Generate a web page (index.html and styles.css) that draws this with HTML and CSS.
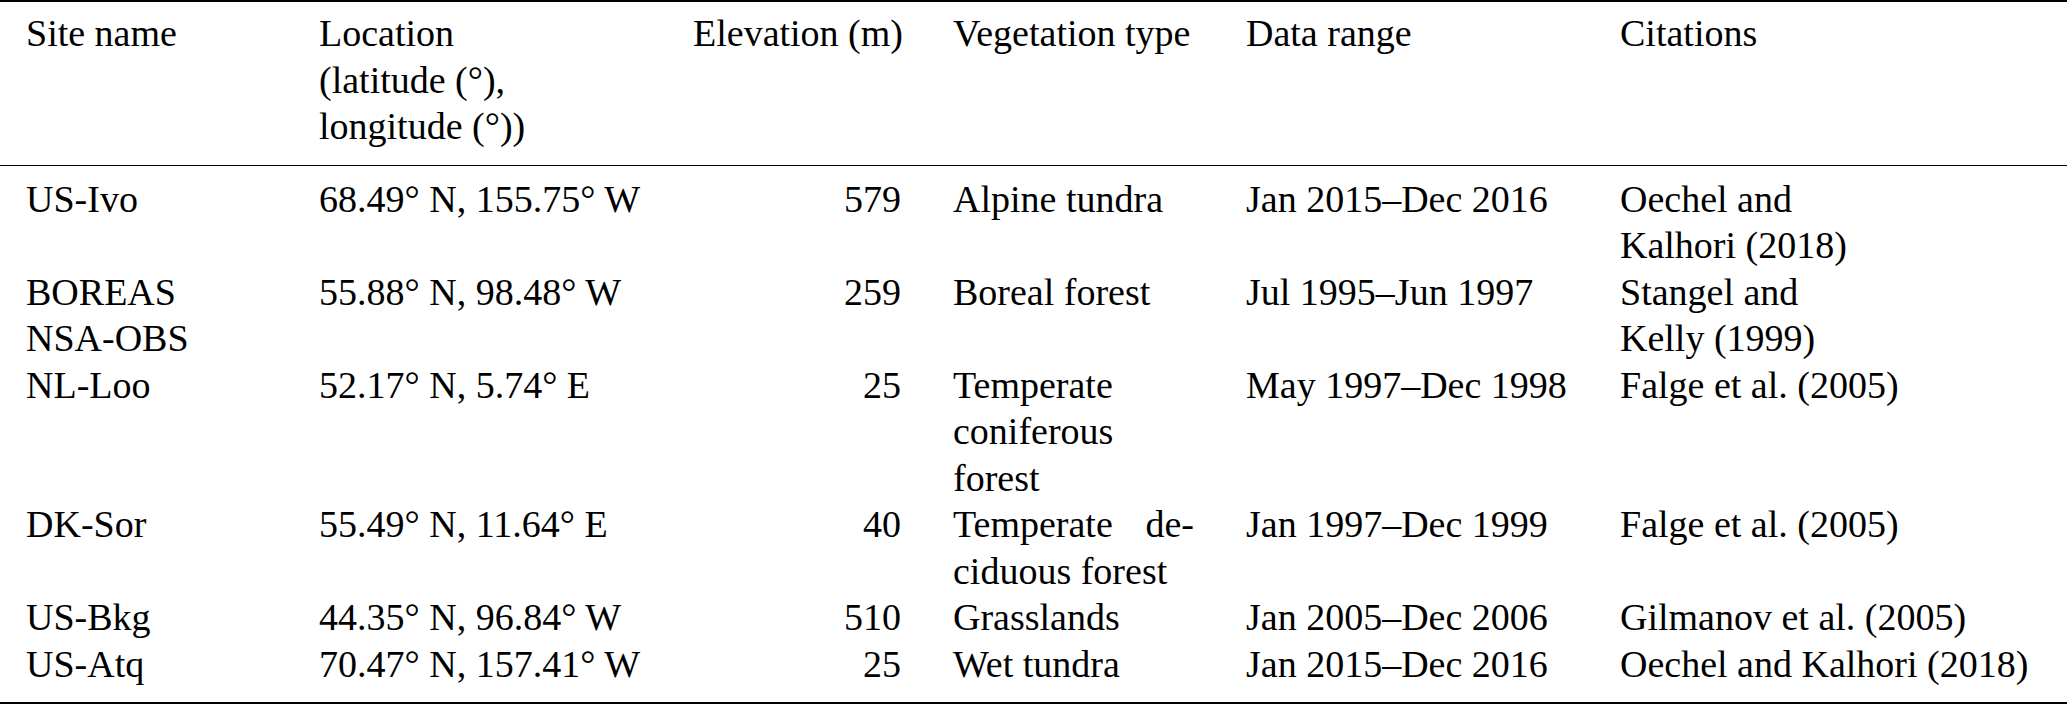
FILE: index.html
```html
<!DOCTYPE html>
<html lang="en">
<head>
<meta charset="utf-8">
<title>Site table</title>
<link rel="stylesheet" href="styles.css">
</head>
<body>
<table class="sites">
  <colgroup>
    <col class="c-site">
    <col class="c-loc">
    <col class="c-elev">
    <col class="c-veg">
    <col class="c-range">
    <col class="c-cite">
  </colgroup>
  <thead>
    <tr>
      <th>Site name</th>
      <th>Location<br>(latitude (°),<br>longitude (°))</th>
      <th class="num">Elevation (m)</th>
      <th>Vegetation type</th>
      <th>Data range</th>
      <th>Citations</th>
    </tr>
  </thead>
  <tbody>
    <tr>
      <td>US-Ivo</td>
      <td>68.49° N, 155.75° W</td>
      <td class="num">579</td>
      <td>Alpine tundra</td>
      <td>Jan 2015–Dec 2016</td>
      <td>Oechel and<br>Kalhori (2018)</td>
    </tr>
    <tr>
      <td>BOREAS<br>NSA-OBS</td>
      <td>55.88° N, 98.48° W</td>
      <td class="num">259</td>
      <td>Boreal forest</td>
      <td>Jul 1995–Jun 1997</td>
      <td>Stangel and<br>Kelly (1999)</td>
    </tr>
    <tr>
      <td>NL-Loo</td>
      <td>52.17° N, 5.74° E</td>
      <td class="num">25</td>
      <td>Temperate coniferous forest</td>
      <td>May 1997–Dec 1998</td>
      <td>Falge et al. (2005)</td>
    </tr>
    <tr>
      <td>DK-Sor</td>
      <td>55.49° N, 11.64° E</td>
      <td class="num">40</td>
      <td><span class="just">Temperate de-</span>ciduous forest</td>
      <td>Jan 1997–Dec 1999</td>
      <td>Falge et al. (2005)</td>
    </tr>
    <tr>
      <td>US-Bkg</td>
      <td>44.35° N, 96.84° W</td>
      <td class="num">510</td>
      <td>Grasslands</td>
      <td>Jan 2005–Dec 2006</td>
      <td>Gilmanov et al. (2005)</td>
    </tr>
    <tr>
      <td>US-Atq</td>
      <td>70.47° N, 157.41° W</td>
      <td class="num">25</td>
      <td>Wet tundra</td>
      <td>Jan 2015–Dec 2016</td>
      <td>Oechel and Kalhori (2018)</td>
    </tr>
  </tbody>
</table>
</body>
</html>
```

FILE: styles.css
```css
html, body {
  margin: 0;
  padding: 0;
  background: #ffffff;
}

body {
  font-family: "Liberation Serif", "Times New Roman", serif;
  font-size: 38px;
  line-height: 46.5px;
  color: #000000;
}

.sites {
  width: 2067px;
  table-layout: fixed;
  border-collapse: separate;
  border-spacing: 0;
}

.c-site { width: 293px; }
.c-loc { width: 374px; }
.c-elev { width: 260px; }
.c-veg { width: 293px; }
.c-range { width: 374px; }
.c-cite { width: 473px; }

.sites th,
.sites td {
  padding: 0 26px;
  text-align: left;
  vertical-align: top;
  font-weight: normal;
}

.sites th {
  white-space: nowrap;
  padding-top: 8px;
  padding-bottom: 15px;
  border-top: 2px solid #000000;
  border-bottom: 1px solid #000000;
}

.sites .num {
  text-align: right;
}

.sites tbody tr:first-child td {
  padding-top: 10px;
}

.sites tbody tr:last-child td {
  padding-bottom: 15px;
  border-bottom: 2px solid #000000;
}

.just {
  display: block;
  text-align: justify;
  text-align-last: justify;
}
```
